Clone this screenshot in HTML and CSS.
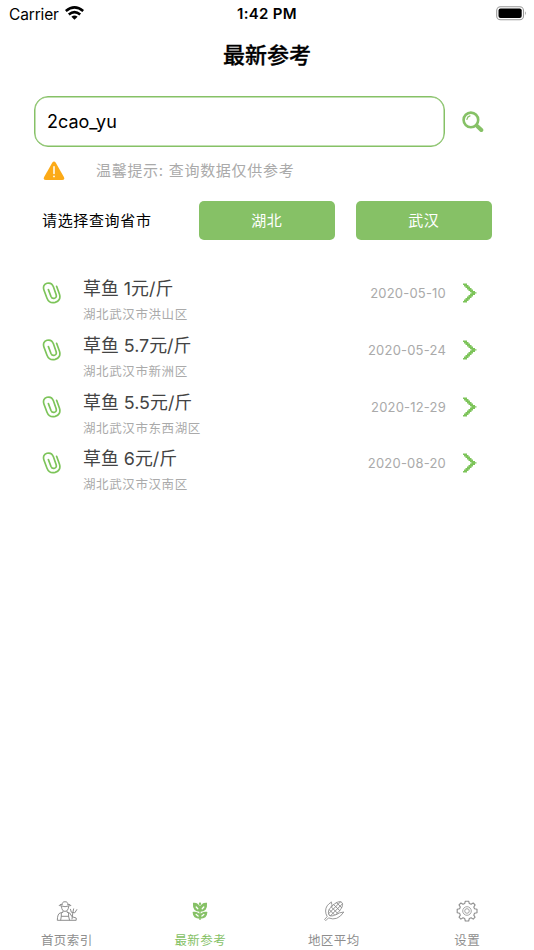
FILE: index.html
```html
<!DOCTYPE html>
<html lang="zh-CN">
<head>
<meta charset="utf-8">
<title>最新参考</title>
<link rel="stylesheet" href="styles.css">
</head>
<body>
<svg class="defs" aria-hidden="true">
  <symbol id="clip" viewBox="0 0 20 22">
    <path d="M14.6 4.3 17.4 12C18.9 16.4 16.8 19.4 13.2 20.4 9.4 21.3 6.4 19.7 5 16.2L2 8.2C.7 4.6 2.2 2.1 5 1.3 7.9.5 10.3 1.8 11.4 4.8L14.1 12.5C14.7 14.6 14.1 15.9 12.6 16.3 11 16.8 9.7 16.2 9 14.5L6.4 7.6" fill="none" stroke="currentColor" stroke-width="1.7" stroke-linecap="round" stroke-linejoin="round"/>
  </symbol>
  <symbol id="chevron" viewBox="0 0 14 20">
    <path d="M0 .5H4V2H5.5V3.5H7V5H8.5V6.5H10V8H12V9.2H13.5V10.6H12V12H10V13.5H8.5V15H7V16.5H5.5V18H4V19.5H0V18H1V16.5H2.5V15H4V13.5H5.5V12H7V10.6H8.4V9.2H7V8H5.5V6.5H4V5H2.5V3.5H1V2H0Z" fill="currentColor"/>
  </symbol>
</svg>
<div class="app">
  <header class="status">
    <div class="carrier"><span>Carrier</span>
      <svg class="wifi" width="19" height="14" viewBox="0 0 19 14"><g fill="none" stroke="#000" stroke-width="2.6"><path d="M.8 5Q9.5-2.2 18.2 5"/><path d="M3.8 8.4Q9.5 3.7 15.2 8.4"/></g><path d="M6.4 10.8Q9.5 8.2 12.6 10.8L9.5 13.8Z"/></svg>
    </div>
    <div class="time">1:42 PM</div>
    <svg class="battery" width="31" height="15" viewBox="0 0 31 15"><rect x=".7" y=".8" width="26.8" height="13" rx="3.8" fill="none" stroke="#999" stroke-width="1.1"/><rect x="2.5" y="2.6" width="23.2" height="9.4" rx="2"/><path d="M29 5.2Q30.8 7.3 29 9.4Z" fill="#888"/></svg>
  </header>
  <h1 class="title">最新参考</h1>
  <div class="search">
    <div class="field">2cao_yu</div>
    <svg class="glass" width="22" height="22" viewBox="0 0 22 22"><g fill="none" stroke="#86c166" stroke-linecap="round"><circle cx="8.9" cy="8.9" r="7.3" stroke-width="2.6"/><path d="M14.7 14.6 19.3 19" stroke-width="4"/><path d="M4.9 8.3Q5.4 5.6 8 4.9" stroke-width="1.2"/></g></svg>
  </div>
  <div class="tip">
    <svg width="22" height="20" viewBox="0 0 22 20"><path d="M9.2 1.8Q11-.7 12.8 1.8L21 16.2Q22 18.9 19 19H3Q0 18.9 1 16.2Z" fill="#fcaa17"/><path d="M11 5.7V12.4" stroke="#fff" stroke-width="1.5" stroke-linecap="round"/><circle cx="11" cy="15.4" r=".9" fill="#fff"/></svg>
    <span>温馨提示: 查询数据仅供参考</span>
  </div>
  <div class="region">
    <span class="region-label">请选择查询省市</span>
    <div class="button">湖北</div>
    <div class="button">武汉</div>
  </div>
  <main class="list">
    <div class="row"><svg class="clip"><use href="#clip"/></svg><div class="info"><div class="price">草鱼 1元/斤</div><div class="place">湖北武汉市洪山区</div></div><div class="date">2020-05-10</div><svg class="chevron"><use href="#chevron"/></svg></div>
    <div class="row"><svg class="clip"><use href="#clip"/></svg><div class="info"><div class="price">草鱼 5.7元/斤</div><div class="place">湖北武汉市新洲区</div></div><div class="date">2020-05-24</div><svg class="chevron"><use href="#chevron"/></svg></div>
    <div class="row"><svg class="clip"><use href="#clip"/></svg><div class="info"><div class="price">草鱼 5.5元/斤</div><div class="place">湖北武汉市东西湖区</div></div><div class="date">2020-12-29</div><svg class="chevron"><use href="#chevron"/></svg></div>
    <div class="row"><svg class="clip"><use href="#clip"/></svg><div class="info"><div class="price">草鱼 6元/斤</div><div class="place">湖北武汉市汉南区</div></div><div class="date">2020-08-20</div><svg class="chevron"><use href="#chevron"/></svg></div>
  </main>
  <nav class="tabs">
    <div class="tab"><svg width="22" height="22" viewBox="0 0 22 22" fill="none" stroke="currentColor" stroke-width="1" stroke-linecap="round" stroke-linejoin="round"><path d="M6 4.8Q6.3 1.3 9 1.8 11.8 1.3 12 4.8M6 4.3Q3.2 4.4 3.2 5.5 9 7.9 14.9 5.5 14.9 4.4 12 4.3M5.5 6.6Q5.6 11 9 11.4 12.5 11 12.6 6.6M7 10.8V12.3L4.2 13Q1.5 13.5 1.3 20.3H20.2V18L16 16.7 13.7 13 11 12.3V10.8M5.3 13V16.3H12.6V13M5.3 16.3 4.7 20M12.6 16.3 13.5 20M14.5 9.3 15.3 12.2 18.8 12.8 20.8 9.6M17.6 8.9 16.8 13 16 19"/></svg><span>首页索引</span></div>
    <div class="tab active"><svg width="22" height="22" viewBox="0 0 22 22"><path d="M11 6V20M11 11.2Q4 11.3 4.6 3.3 9 3 11 8 13 3 17.4 3.3 18 11.3 11 11.2M11 18.2Q4.5 18 4.3 12.5 8.8 11.8 11 15.7 13.2 11.8 17.7 12.5 17.5 18 11 18.2" fill="currentColor" stroke="currentColor" stroke-width="1.3"/><path d="M9.8 3.4 11 2.1 12.2 3.4 11 6.5Z" fill="currentColor"/><path d="M7.2 7 8.8 8.8M14.8 7 13.2 8.8M7.2 14.5 9.1 16M14.8 14.5 12.9 16" stroke="#fff" stroke-width="1.3" stroke-linecap="round"/></svg><span>最新参考</span></div>
    <div class="tab"><svg width="22" height="22" viewBox="0 0 22 22" fill="none" stroke="currentColor" stroke-width=".9" stroke-linecap="round" stroke-linejoin="round"><g transform="rotate(-45 12.5 8.8)"><path d="M3.6 8.8C4 5.8 7 4.4 11.5 4.4 17 4.4 21.4 6 21.4 8.8 21.4 11.6 17 13.2 11.5 13.2 7 13.2 4 11.8 3.6 8.8ZM4 7.4H21M4 10.2H21M7.5 5.2V12.4M10.8 4.4V13.2M14.2 4.5V13.1M17.6 5.2V12.4"/></g><path d="M8.3 2.2Q2.6 5.2 2.6 11 2.6 14 4.2 16.6L1.6 19.4 2.8 20.6 5.5 17.9Q14.4 21.6 20.8 12 16.5 12.2 13 14.7M8.3 2.2Q9.3 4.3 8.9 6.5"/></svg><span>地区平均</span></div>
    <div class="tab"><svg width="22" height="22" viewBox="0 0 22 22" fill="none" stroke="currentColor" stroke-width="1.1" stroke-linejoin="round"><path d="M9.3 1.2H12.7L13.3 3.6 15.1 4.3 17.2 3 19.1 4.9 17.8 7 18.5 8.7 21 9.3V12.7L18.5 13.3 17.8 15.1 19.1 17.2 17.2 19.1 15.1 17.8 13.3 18.5 12.7 21H9.3L8.7 18.5 7 17.8 4.9 19.1 3 17.2 4.3 15.1 3.6 13.3 1.2 12.7V9.3L3.6 8.7 4.3 7 3 4.9 4.9 3 7 4.3 8.7 3.6Z"/><circle cx="11" cy="11" r="4.3" stroke-width=".8"/><circle cx="11" cy="11" r="2.3" stroke-width=".8"/></svg><span>设置</span></div>
  </nav>
</div>
</body>
</html>
```
FILE: styles.css
```css
* { box-sizing: border-box; }
body {
  margin: 0;
  background: #fff;
  color: #000;
  font-family: Inter, "Noto Sans CJK SC", sans-serif;
}
svg { display: block; flex: none; }
.defs { display: none; }
.app {
  width: 534px;
  height: 950px;
  display: flex;
  flex-direction: column;
  overflow: hidden;
  white-space: nowrap;
}
.status {
  height: 28px;
  display: grid;
  grid-template-columns: 1fr auto 1fr;
  align-items: center;
  padding: 0 7px 0 9px;
  font-size: 15.5px;
}
.carrier { display: flex; align-items: center; gap: 6px; letter-spacing: -.15px; }
.wifi { margin-top: -2px; }
.time { font-weight: 600; font-size: 15px; letter-spacing: .3px; margin: -1px 2px 0 0; }
.battery { justify-self: end; margin-top: -2px; }
.title {
  height: 52px;
  margin: 0;
  text-align: center;
  font-size: 22px;
  font-weight: 500;
  line-height: 54px;
  -webkit-text-stroke: .3px #000;
}
.search {
  height: 51px;
  margin: 16px 50px 0 34px;
  display: flex;
  align-items: center;
  justify-content: space-between;
}
.field {
  width: 411px;
  height: 51px;
  border: 1px solid #86c166;
  box-shadow: inset 0 0 0 .5px #86c166;
  border-radius: 14px;
  padding-left: 12px;
  font-size: 18px;
  line-height: 50px;
}
.tip {
  height: 46px;
  margin-top: 1px;
  padding-left: 43px;
  display: flex;
  align-items: center;
  gap: 31px;
  color: #aaa;
  font-size: 15px;
  letter-spacing: .7px;
}
.tip span { margin-top: -3px; }
.region {
  height: 39px;
  margin-top: 7px;
  padding-left: 42px;
  display: flex;
  align-items: center;
  font-size: 15px;
}
.region-label { width: 156.5px; letter-spacing: .65px; margin-top: -2px; }
.button {
  width: 136.5px;
  height: 39px;
  margin: -1px 20.5px 0 0;
  border-radius: 5px;
  background: #86c166;
  color: #fff;
  text-align: center;
  line-height: 39px;
  letter-spacing: .6px;
}
.list { margin-top: 32px; flex: 1; }
.row {
  height: 56.8px;
  padding: 0 57px 0 42px;
  display: flex;
  align-items: flex-start;
}
.clip { width: 20px; height: 22px; margin-top: 10px; color: #7dc45a; }
.info { margin-left: 21px; flex: 1; }
.price { height: 34px; font-size: 17.9px; line-height: 34px; color: #444; }
.place { height: 18px; font-size: 12.5px; line-height: 18px; letter-spacing: .6px; color: #aaa; }
.date { margin-top: 11px; font-size: 13px; line-height: 20px; letter-spacing: .2px; color: #aaa; }
.chevron { width: 14px; height: 20px; margin: 11px 0 0 17px; color: #7dc45a; }
.tabs {
  height: 50px;
  display: grid;
  grid-template-columns: repeat(4, 1fr);
  color: #8e8e8e;
}
.tab { display: flex; flex-direction: column; align-items: center; font-size: 12.5px; line-height: 18px; letter-spacing: .4px; }
.tab span { margin-top: 10px; }
.active { color: #86c166; }
```
